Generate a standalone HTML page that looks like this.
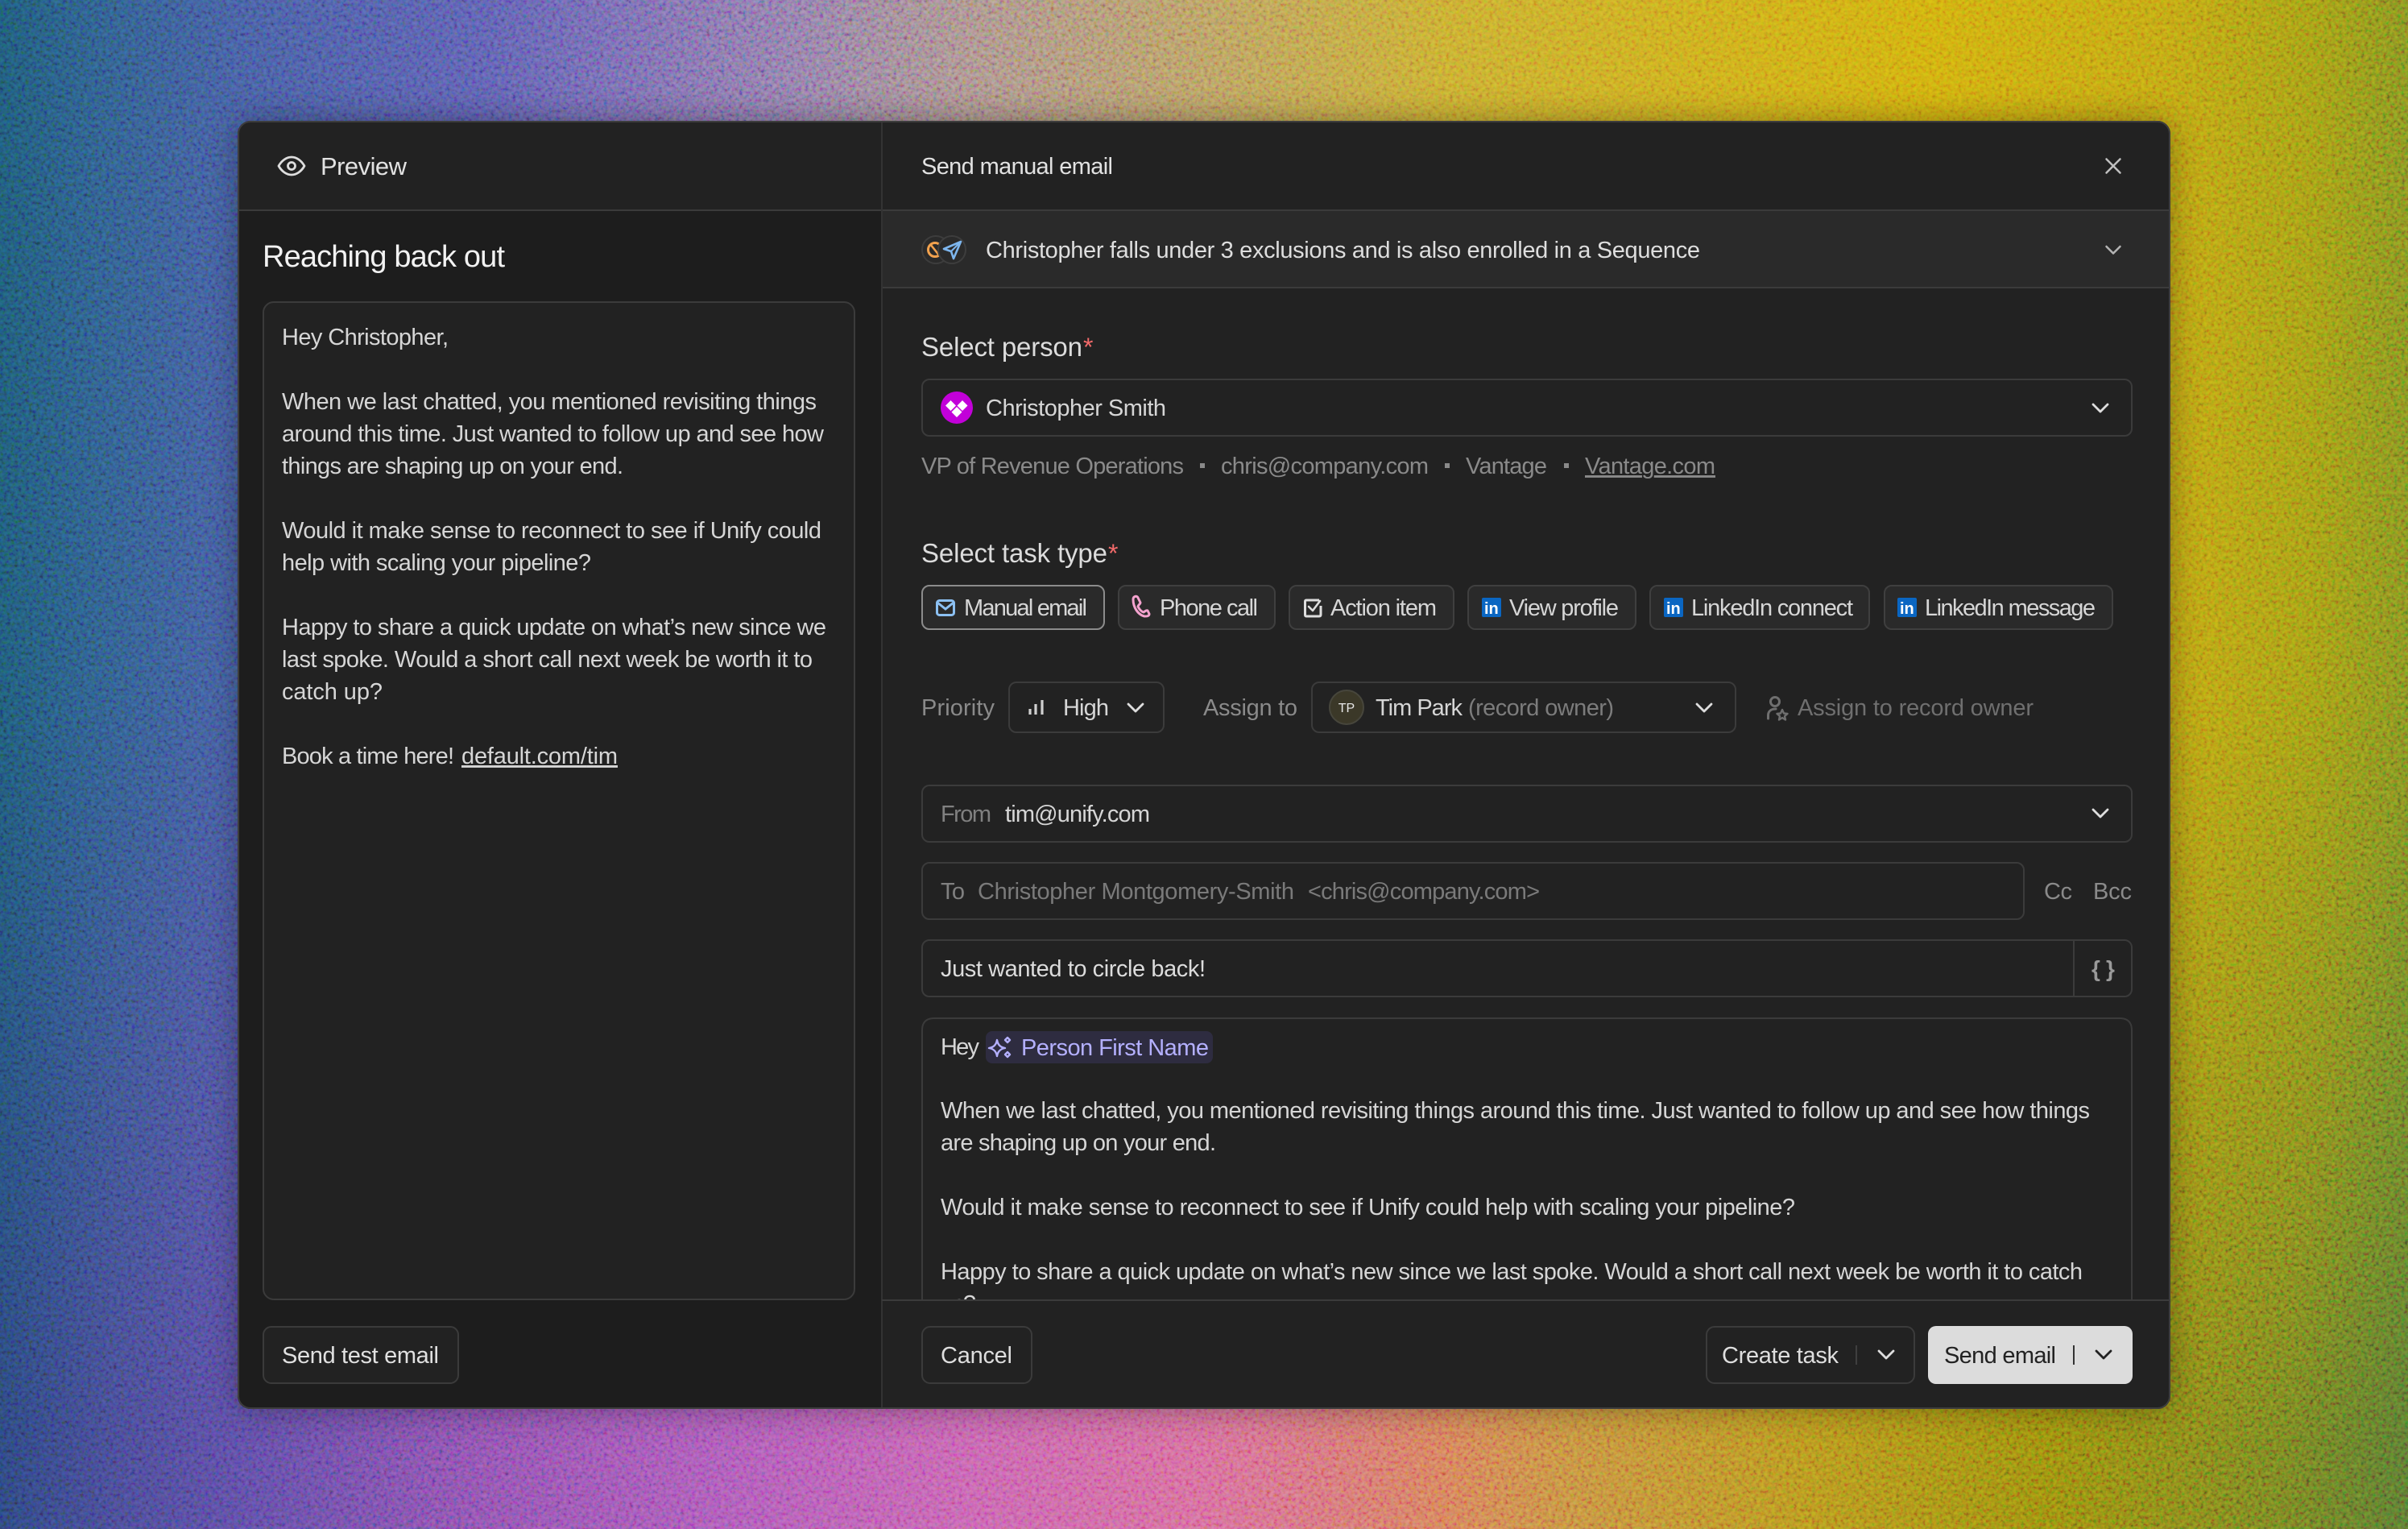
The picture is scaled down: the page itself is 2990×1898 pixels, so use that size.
<!DOCTYPE html>
<html lang="en"><head><meta charset="utf-8"><title>Send manual email</title>
<style>
html,body{margin:0;padding:0;width:2990px;height:1898px;overflow:hidden;background:#222}
.bg,.bg div,svg.full{position:absolute;left:0;top:0;width:2990px;height:1898px}
.b{background:linear-gradient(90deg,#2c4478 0%,#47488f 5%,#5a4aa0 10%,#8a50ac 20%,#a858b4 30%,#c460ac 40%,#d46896 50%,#d47076 55%,#d47a58 60%,#c48a40 65%,#b4901f 75%,#968810 85%,#727d22 95%,#587430 100%)}
.t{background:linear-gradient(90deg,#1f5672 0%,#2e5a84 4%,#445a9c 10%,#5a5cac 20%,#7066ae 25%,#8c78a6 33%,#a68c88 40%,#b69a60 50%,#c6a830 60%,#caa81e 70%,#ceaa10 80%,#bea014 90%,#a09816 96%,#808c20 100%);-webkit-mask-image:linear-gradient(180deg,#000 0%,#000 45%,transparent 95%);mask-image:linear-gradient(180deg,#000 0%,#000 45%,transparent 95%)}
svg.noise{mix-blend-mode:overlay}
.modal{position:absolute;left:295px;top:150px;width:2400px;height:1599px;border-radius:16px;box-shadow:0 0 40px rgba(0,0,0,.35)}
svg text{font-family:"Liberation Sans",sans-serif;font-size:29px;fill:#d6d6d6;white-space:pre}
.g{fill:#8a8a8a}.d{fill:#6f6f6f}.h{font-size:31px;fill:#e2e2e2}.l{font-size:33px;fill:#dcdcdc}.r{font-size:32px;fill:#f26a6a}
.u{text-decoration:underline}
.box{fill:none;stroke:#3b3b3b;stroke-width:2}
.chip{fill:#2a2a2a;stroke:#3f3f3f;stroke-width:2}
.ch{fill:none;stroke:#dedede;stroke-width:2.800;stroke-linecap:round;stroke-linejoin:round}
</style></head><body>
<div class="bg"><div class="b"></div><div class="t"></div></div>
<svg class="full noise" viewBox="0 0 2990 1898"><filter id="n" x="0" y="0" width="100%" height="100%"><feTurbulence type="fractalNoise" baseFrequency=".22" numOctaves="2" seed="4"/><feColorMatrix values="2 0 0 0 -.5 0 2 0 0 -.5 0 0 2 0 -.5 0 0 0 0 .3"/></filter><rect width="2990" height="1898" filter="url(#n)"/></svg>
<div class="modal"></div>
<svg class="full" viewBox="0 0 2990 1898">
<defs><clipPath id="m"><rect x="295" y="150" width="2400" height="1599" rx="16"/></clipPath><clipPath id="bc"><rect x="1140" y="1255" width="1520" height="358"/></clipPath></defs>
<g clip-path="url(#m)">
<rect x="295" y="150" width="2400" height="1599" fill="#222"/>
<rect x="295" y="262" width="800" height="1487" fill="#1d1d1d"/>
<rect x="1095" y="262" width="1600" height="95" fill="#2a2a2a"/>
<rect x="295" y="260" width="2400" height="2" fill="#3b3b3b"/>
<rect x="1095" y="356" width="1600" height="2" fill="#3b3b3b"/>
<rect x="1094" y="150" width="2" height="1599" fill="#333"/>
<rect x="1095" y="1613" width="1600" height="2" fill="#3b3b3b"/>
</g>
<rect x="296" y="151" width="2398" height="1597" rx="15" fill="none" stroke="#3d3d3d" stroke-width="2"/>

<!-- left header -->
<path class="ch" d="M346 206C350 199 356 195 362 195S374 199 378 206C374 213 368 217 362 217S350 213 346 206Z"/>
<circle class="ch" cx="362" cy="206" r="4.5"/>
<text class="h" x="398" y="217" textLength="107">Preview</text>
<text x="326" y="331" style="font-size:38px;fill:#f2f2f2" textLength="301">Reaching back out</text>

<rect x="327" y="375" width="734" height="1238" rx="13" fill="#222" stroke="#3b3b3b" stroke-width="2"/>
<text x="350" y="428" textLength="207">Hey Christopher,</text>
<text x="350" y="508" textLength="664">When we last chatted, you mentioned revisiting things</text>
<text x="350" y="548" textLength="673">around this time. Just wanted to follow up and see how</text>
<text x="350" y="588" textLength="424">things are shaping up on your end.</text>
<text x="350" y="668" textLength="670">Would it make sense to reconnect to see if Unify could</text>
<text x="350" y="708" textLength="384">help with scaling your pipeline?</text>
<text x="350" y="788" textLength="676">Happy to share a quick update on what’s new since we</text>
<text x="350" y="828" textLength="659">last spoke. Would a short call next week be worth it to</text>
<text x="350" y="868" textLength="125">catch up?</text>
<text x="350" y="948" textLength="214">Book a time here!</text>
<text class="u" x="573" y="948" textLength="194">default.com/tim</text>

<rect x="327" y="1647" width="242" height="70" rx="10" fill="#222" stroke="#3b3b3b" stroke-width="2"/>
<text x="350" y="1692" textLength="195" style="fill:#e0e0e0">Send test email</text>

<!-- right header -->
<text x="1144" y="216" textLength="238" style="fill:#e2e2e2">Send manual email</text>
<path class="ch" d="M2615.500 197.500L2632.500 214.500M2632.500 197.500L2615.500 214.500" style="stroke:#c0c0c0;stroke-width:2.500"/>

<!-- alert band -->
<circle cx="1162" cy="310" r="17" fill="#2a2a2a" stroke="#3d3d3d" stroke-width="2"/>
<circle cx="1161" cy="310" r="8.500" fill="none" stroke="#f2a24e" stroke-width="3"/>
<path d="M1155 303L1167 318" stroke="#f2a24e" stroke-width="2.600"/>
<circle cx="1182" cy="310" r="17" fill="#2a2a2a" stroke="#3d3d3d" stroke-width="2"/>
<path d="M1193 300L1172 309L1181 312L1184 321Z" fill="none" stroke="#7db6ee" stroke-width="2.600" stroke-linejoin="round"/>
<path d="M1193 300L1181 312" stroke="#7db6ee" stroke-width="2"/>
<text x="1224" y="320" textLength="887" style="fill:#dedede">Christopher falls under 3 exclusions and is also enrolled in a Sequence</text>
<path class="ch" d="M2615.500 306L2624 314.500L2632.500 306" style="stroke:#b4b4b4;stroke-width:2.500"/>

<!-- select person -->
<text class="l" x="1144" y="442" textLength="200">Select person</text>
<text class="r" x="1345" y="442">*</text>
<rect class="box" x="1145" y="471" width="1502" height="70" rx="9"/>
<circle cx="1188" cy="506" r="20" fill="#c200d9"/>
<path d="M1180.500 497L1187 503.500L1180.500 510L1174 503.500ZM1195 497L1201.500 503.500L1195 510L1188.500 503.500ZM1188 505L1194.500 511.500L1188 518L1181.500 511.500Z" fill="#fff"/>
<text x="1224" y="516" textLength="224">Christopher Smith</text>
<path class="ch" d="M2599 502L2608 511L2617 502"/>
<text class="g" x="1144" y="588" textLength="326">VP of Revenue Operations</text>
<rect x="1490" y="575" width="6" height="6" fill="#8a8a8a"/>
<text class="g" x="1516" y="588" textLength="258">chris@company.com</text>
<rect x="1794" y="575" width="6" height="6" fill="#8a8a8a"/>
<text class="g" x="1820" y="588" textLength="101">Vantage</text>
<rect x="1942" y="575" width="6" height="6" fill="#8a8a8a"/>
<text class="g u" x="1968" y="588" textLength="162">Vantage.com</text>

<!-- task type -->
<text class="l" x="1144" y="698" textLength="231">Select task type</text>
<text class="r" x="1376" y="698">*</text>
<rect x="1145" y="727" width="226" height="54" rx="9" fill="#2a2a2a" stroke="#8c8c8c" stroke-width="2"/>
<rect class="chip" x="1389" y="727" width="194" height="54" rx="9"/>
<rect class="chip" x="1601" y="727" width="204" height="54" rx="9"/>
<rect class="chip" x="1823" y="727" width="208" height="54" rx="9"/>
<rect class="chip" x="2049" y="727" width="272" height="54" rx="9"/>
<rect class="chip" x="2340" y="727" width="283" height="54" rx="9"/>
<rect x="1163.500" y="745.500" width="21" height="18" rx="3" fill="none" stroke="#8cc0f2" stroke-width="3"/>
<path d="M1164 748L1174 756L1184 748" fill="none" stroke="#8cc0f2" stroke-width="3"/>
<text x="1197" y="764" textLength="153">Manual email</text>
<path d="M1407 747C1407 743 1412 742 1413 745L1416 751C1416 753 1413 754 1413 756C1415 760 1417 762 1420 763C1422 762 1423 760 1425 761L1427 765C1427 768 1424 768 1421 768C1413 766 1407 757 1407 747Z" transform="translate(0 -3)" fill="none" stroke="#f5a3cf" stroke-width="3" stroke-linejoin="round"/>
<text x="1440" y="764" textLength="122">Phone call</text>
<path d="M1638 745H1622Q1620.500 745 1620.500 747V763Q1620.500 765 1622 765H1638Q1640 765 1640 763V752" fill="none" stroke="#dedede" stroke-width="3"/>
<path class="ch" d="M1625 753L1630 758L1639 746" style="stroke-width:2.600"/>
<text x="1652" y="764" textLength="132">Action item</text>
<rect x="1840" y="742" width="24" height="24" rx="2" fill="#0a66c2"/><text x="1843" y="762" style="font-size:20px;font-weight:700;fill:#fff">in</text>
<text x="1874" y="764" textLength="136">View profile</text>
<rect x="2066" y="742" width="24" height="24" rx="2" fill="#0a66c2"/><text x="2069" y="762" style="font-size:20px;font-weight:700;fill:#fff">in</text>
<text x="2100" y="764" textLength="201">LinkedIn connect</text>
<rect x="2356" y="742" width="24" height="24" rx="2" fill="#0a66c2"/><text x="2359" y="762" style="font-size:20px;font-weight:700;fill:#fff">in</text>
<text x="2390" y="764" textLength="212">LinkedIn message</text>

<!-- priority row -->
<text class="g" x="1144" y="888" textLength="91">Priority</text>
<rect class="box" x="1253" y="847" width="192" height="62" rx="9"/>
<path d="M1279 880V887M1286 874V887M1294 869V887" stroke="#d0d0d0" stroke-width="3.200" fill="none"/>
<text x="1320" y="888" textLength="57">High</text>
<path class="ch" d="M1401 874L1410 883L1419 874"/>
<text class="g" x="1494" y="888" textLength="117">Assign to</text>
<rect class="box" x="1629" y="847" width="526" height="62" rx="9"/>
<circle cx="1672" cy="878" r="21" fill="#3b3828" stroke="#47463c" stroke-width="2"/>
<text x="1672" y="884" text-anchor="middle" style="font-size:16px;fill:#e8e8e8">TP</text>
<text x="1708" y="888" textLength="108">Tim Park</text>
<text class="g" x="1823" y="888" textLength="181" style="fill:#7c7c7c">(record owner)</text>
<path class="ch" d="M2107 874L2116 883L2125 874"/>
<g fill="none" stroke="#6f6f6f" stroke-width="3" stroke-linejoin="round" stroke-linecap="round">
<circle cx="2204" cy="871" r="5.500"/>
<path d="M2195.500 892V888C2195.500 883 2199 880 2205 880"/>
<path d="M2213 881L2215 885.500L2219.500 886L2216 889L2217 893.500L2213 891L2209 893.500L2210 889L2206.500 886L2211 885.500Z" stroke-width="2.400"/>
</g>
<text class="d" x="2232" y="888" textLength="293">Assign to record owner</text>

<!-- from / to / subject -->
<rect class="box" x="1145" y="975" width="1502" height="70" rx="9"/>
<text class="d" x="1168" y="1020" textLength="63" style="fill:#808080">From</text>
<text x="1248" y="1020" textLength="180">tim@unify.com</text>
<path class="ch" d="M2599 1005L2608 1014L2617 1005"/>
<rect class="box" x="1145" y="1071" width="1368" height="70" rx="9"/>
<text class="d" x="1168" y="1116" textLength="30" style="fill:#808080">To</text>
<text class="d" x="1214" y="1116" textLength="393" style="fill:#7a7a7a">Christopher Montgomery-Smith</text>
<text class="d" x="1624" y="1116" textLength="288" style="fill:#7a7a7a">&lt;chris@company.com&gt;</text>
<text class="g" x="2538" y="1116" textLength="35">Cc</text>
<text class="g" x="2599" y="1116" textLength="48">Bcc</text>
<rect class="box" x="1145" y="1167" width="1502" height="70" rx="9"/>
<text x="1168" y="1212" textLength="329" style="fill:#dcdcdc">Just wanted to circle back!</text>
<rect x="2574" y="1167" width="2" height="70" fill="#3b3b3b"/>
<text x="2597" y="1212" style="font-size:28px;font-weight:700;fill:#9a9a9a">{</text>
<text x="2615" y="1212" style="font-size:28px;font-weight:700;fill:#9a9a9a">}</text>

<!-- body -->
<path class="box" d="M1145 1613V1279Q1145 1264 1160 1264H2632Q2647 1264 2647 1279V1613"/>
<g clip-path="url(#bc)">
<text x="1168" y="1309" textLength="48">Hey</text>
<rect x="1224" y="1280" width="282" height="40" rx="8" fill="#2e2c40"/>
<g fill="none" stroke="#b4b0ff" stroke-width="2.400" stroke-linejoin="round">
<path d="M1238 1291C1239 1297 1242 1300 1248 1301C1242 1302 1239 1305 1238 1311C1237 1305 1234 1302 1228 1301C1234 1300 1237 1297 1238 1291Z"/>
<path d="M1251 1288L1254 1291L1251 1294L1248 1291ZM1251 1306L1254 1309L1251 1312L1248 1309Z"/>
</g>
<text x="1268" y="1310" textLength="233" style="fill:#b4b0ff">Person First Name</text>
<text x="1168" y="1388" textLength="1427">When we last chatted, you mentioned revisiting things around this time. Just wanted to follow up and see how things</text>
<text x="1168" y="1428" textLength="342">are shaping up on your end.</text>
<text x="1168" y="1508" textLength="1061">Would it make sense to reconnect to see if Unify could help with scaling your pipeline?</text>
<text x="1168" y="1588" textLength="1418">Happy to share a quick update on what’s new since we last spoke. Would a short call next week be worth it to catch</text>
<text x="1168" y="1628" textLength="44">up?</text>
</g>

<!-- footer -->
<rect class="box" x="1145" y="1647" width="136" height="70" rx="10"/>
<text x="1168" y="1692" textLength="89" style="fill:#dedede">Cancel</text>
<rect class="box" x="2119" y="1647" width="258" height="70" rx="10"/>
<text x="2138" y="1692" textLength="145" style="fill:#dedede">Create task</text>
<rect x="2304" y="1670" width="2" height="24" fill="#3f3f3f"/>
<path class="ch" d="M2333 1677L2342 1686L2351 1677"/>
<rect x="2394" y="1646" width="254" height="72" rx="10" fill="#dcdcdc"/>
<text x="2414" y="1692" textLength="139" style="fill:#222">Send email</text>
<rect x="2574" y="1670" width="2" height="24" fill="#333"/>
<path class="ch" d="M2603 1677L2612 1686L2621 1677" style="stroke:#222"/>
</svg>
</body></html>
